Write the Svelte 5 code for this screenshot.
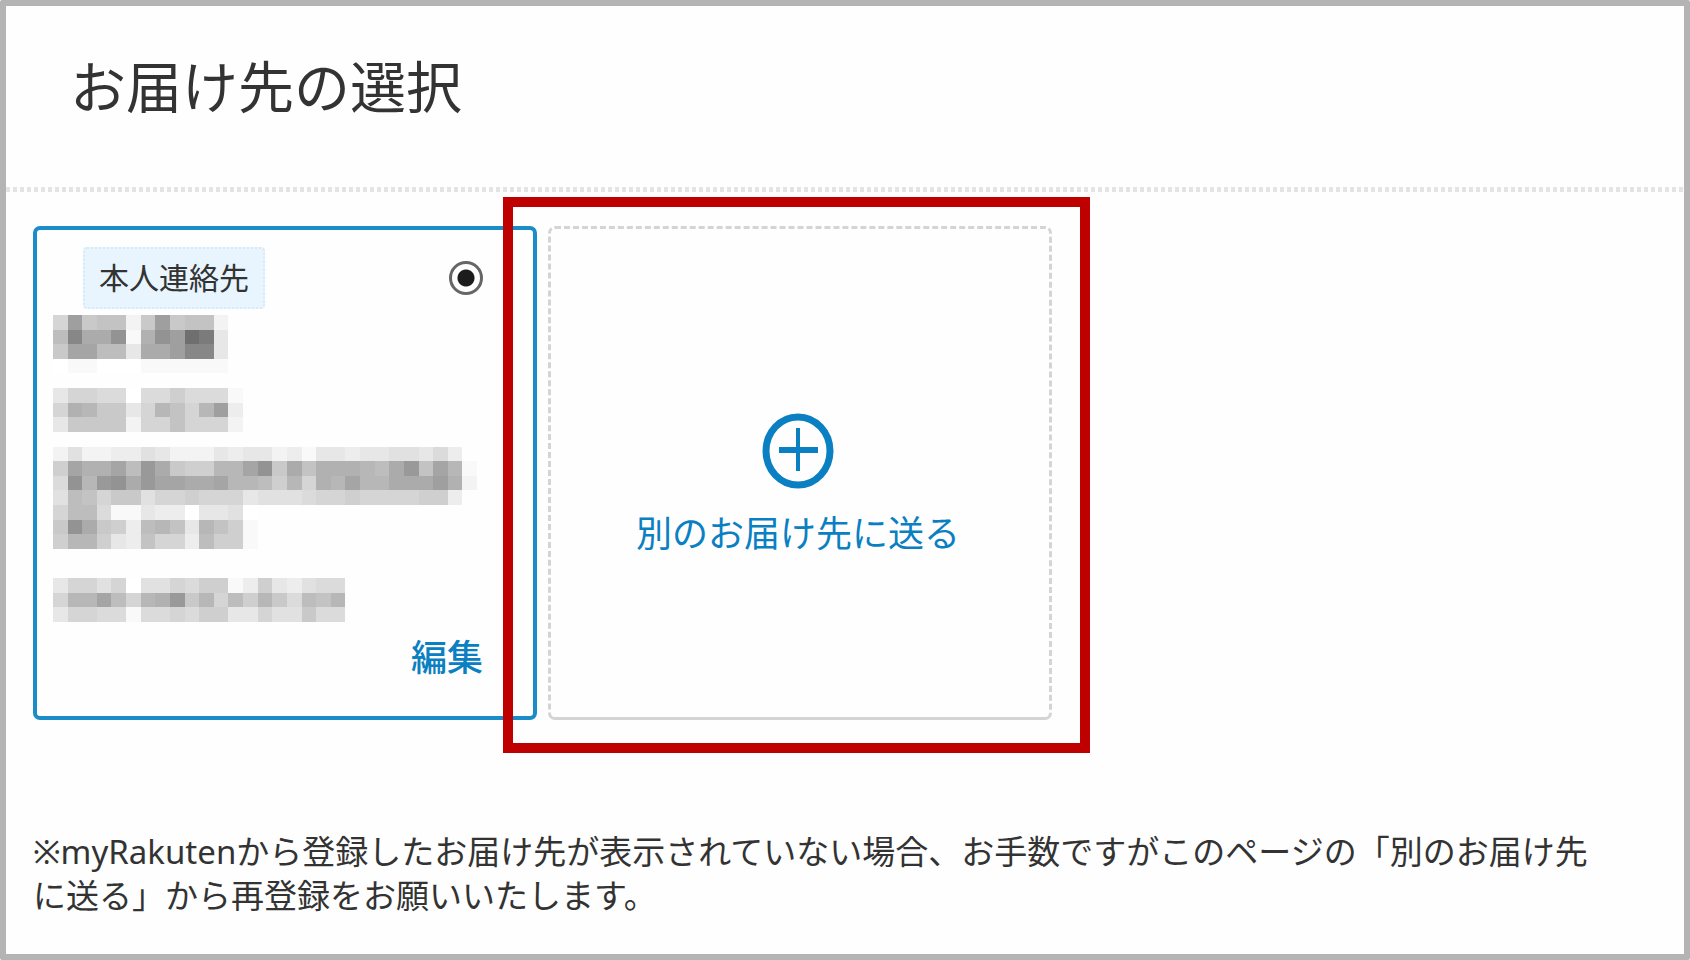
<script lang="ts">
	let selected = 'self';

	// Redacted address lines, one letter per mosaic cell: a = white, each following letter a step darker
	const mosaic = [
		'hqjkkcjqjkkc',
		'luoosbnsqywe',
		'jpplleooquue',
		'abbaaabbbbbb',
		'',
		'ehhggaggigggb',
		'hnmjjehmkhmqd',
		'ejjjjchhkhhhc',
		'',
		'cfccddfecccedeecdbeedeeffegd',
		'ipnnplrojiimmpsjoknnnmlorkpmb',
		'gsmrsorppoopmmlimhnmpmmoooqnc',
		'flkhjjfhhihhhefffghhihhhhiid',
		'hllgbbeddaeefa',
		'jsojidlmkemkib',
		'immiedkhhdliib',
		'',
		'',
		'ehhfhaffhgiibdiedfgg',
		'hmmplhmnrjmhlimjglkm',
		'ehhggbgghgiieehffjgg',
	];

	const cells = mosaic.flatMap((row, y) =>
		[...row].map((letter, x) => ({ x, y, grey: 255 - (letter.charCodeAt(0) - 97) * 6 }))
	);
</script>

<main class="page">
	<header>
		<h1>お届け先の選択</h1>
	</header>

	<section class="content">
		<div class="cards">
			<div class="card selected">
				<div class="card-head">
					<label class="badge" for="address-self">本人連絡先</label>
					<input id="address-self" type="radio" name="address" value="self" bind:group={selected} />
				</div>
				<svg class="mosaic" viewBox="0 0 29 21" preserveAspectRatio="none" shape-rendering="crispEdges" aria-hidden="true">
					{#each cells as cell}
						<rect x={cell.x} y={cell.y} width="1" height="1" fill={`rgb(${cell.grey},${cell.grey},${cell.grey})`} />
					{/each}
				</svg>
				<a class="edit" href="#edit">編集</a>
			</div>

			<div class="add-wrap">
				<button class="card add" type="button">
					<svg class="plus" viewBox="0 0 72 76" fill="none" stroke="currentColor" aria-hidden="true">
						<ellipse cx="36" cy="38" rx="32" ry="34" stroke-width="7" />
						<path d="M17 37H56" stroke-width="6" />
						<path d="M36 15V58" stroke-width="4" />
					</svg>
					<span>別のお届け先に送る</span>
				</button>
				<div class="highlight"></div>
			</div>
		</div>

		<p class="note">
			※myRakutenから登録したお届け先が表示されていない場合、お手数ですがこのページの「別のお届け先に送る」から再登録をお願いいたします。
		</p>
	</section>
</main>

<style>
	:global(body) {
		background: #fff;
	}

	.page {
		box-sizing: border-box;
		min-height: 100vh;
		border: 6px solid #b4b4b4;
		border-radius: 2px;
		background: #fefefe;
		color: #333;
		font-family: 'Noto Sans', 'Noto Sans CJK JP', sans-serif;
	}

	header {
		padding: 48px 64px 74px;
		background: repeating-linear-gradient(to right, #e4e4e4 0 4px, transparent 4px 7px) left bottom / 100% 5px no-repeat;
	}

	h1 {
		margin: 0;
		font-size: 56px;
		font-weight: 400;
		line-height: 64px;
	}

	.content {
		padding: 34px 80px 34px 27px;
	}

	.cards {
		display: flex;
		gap: 11px;
	}

	.card {
		box-sizing: border-box;
		min-height: 494px;
		border-radius: 7px;
	}

	.selected {
		display: flex;
		flex-direction: column;
		flex: 0 1 504px;
		padding: 17px 50px 32px 16px;
		border: 4px solid #1a8cc8;
	}

	.card-head {
		display: flex;
		align-items: center;
		justify-content: space-between;
		padding-left: 30px;
	}

	.badge {
		padding: 7px 14px;
		border: 2px dotted #d6eaf6;
		border-radius: 4px;
		background: #e8f5fe;
		font-size: 30px;
		line-height: 44px;
	}

	input {
		appearance: none;
		box-sizing: border-box;
		width: 34px;
		height: 34px;
		margin: 0;
		border: 3px solid #666;
		border-radius: 50%;
		background: #fff;
	}

	input:checked {
		background: radial-gradient(circle, #1c1c1c 8px, #fff 9px);
	}

	.mosaic {
		width: 424px;
		height: 307px;
		margin: 6px 0 14px;
	}

	.edit {
		align-self: flex-end;
		color: #0a80c2;
		font-size: 36px;
		font-weight: 500;
		line-height: 44px;
		text-decoration: none;
	}

	.add-wrap {
		position: relative;
		display: flex;
		flex: 0 1 504px;
	}

	.add {
		display: flex;
		flex: 1;
		flex-direction: column;
		align-items: center;
		justify-content: center;
		gap: 23px;
		padding: 22px 4px 0 0;
		border: 3px dashed #d4d4d4;
		border-bottom-style: solid;
		background: none;
		color: #0a80c2;
		font: inherit;
		font-size: 36px;
		line-height: 44px;
		cursor: pointer;
	}

	.plus {
		width: 72px;
		height: 76px;
	}

	.highlight {
		position: absolute;
		inset: -29px -38px -33px -45px;
		border: 10px solid #bf0000;
		pointer-events: none;
	}

	.note {
		margin: 110px 0 0;
		font-size: 33px;
		line-height: 44px;
	}
</style>
